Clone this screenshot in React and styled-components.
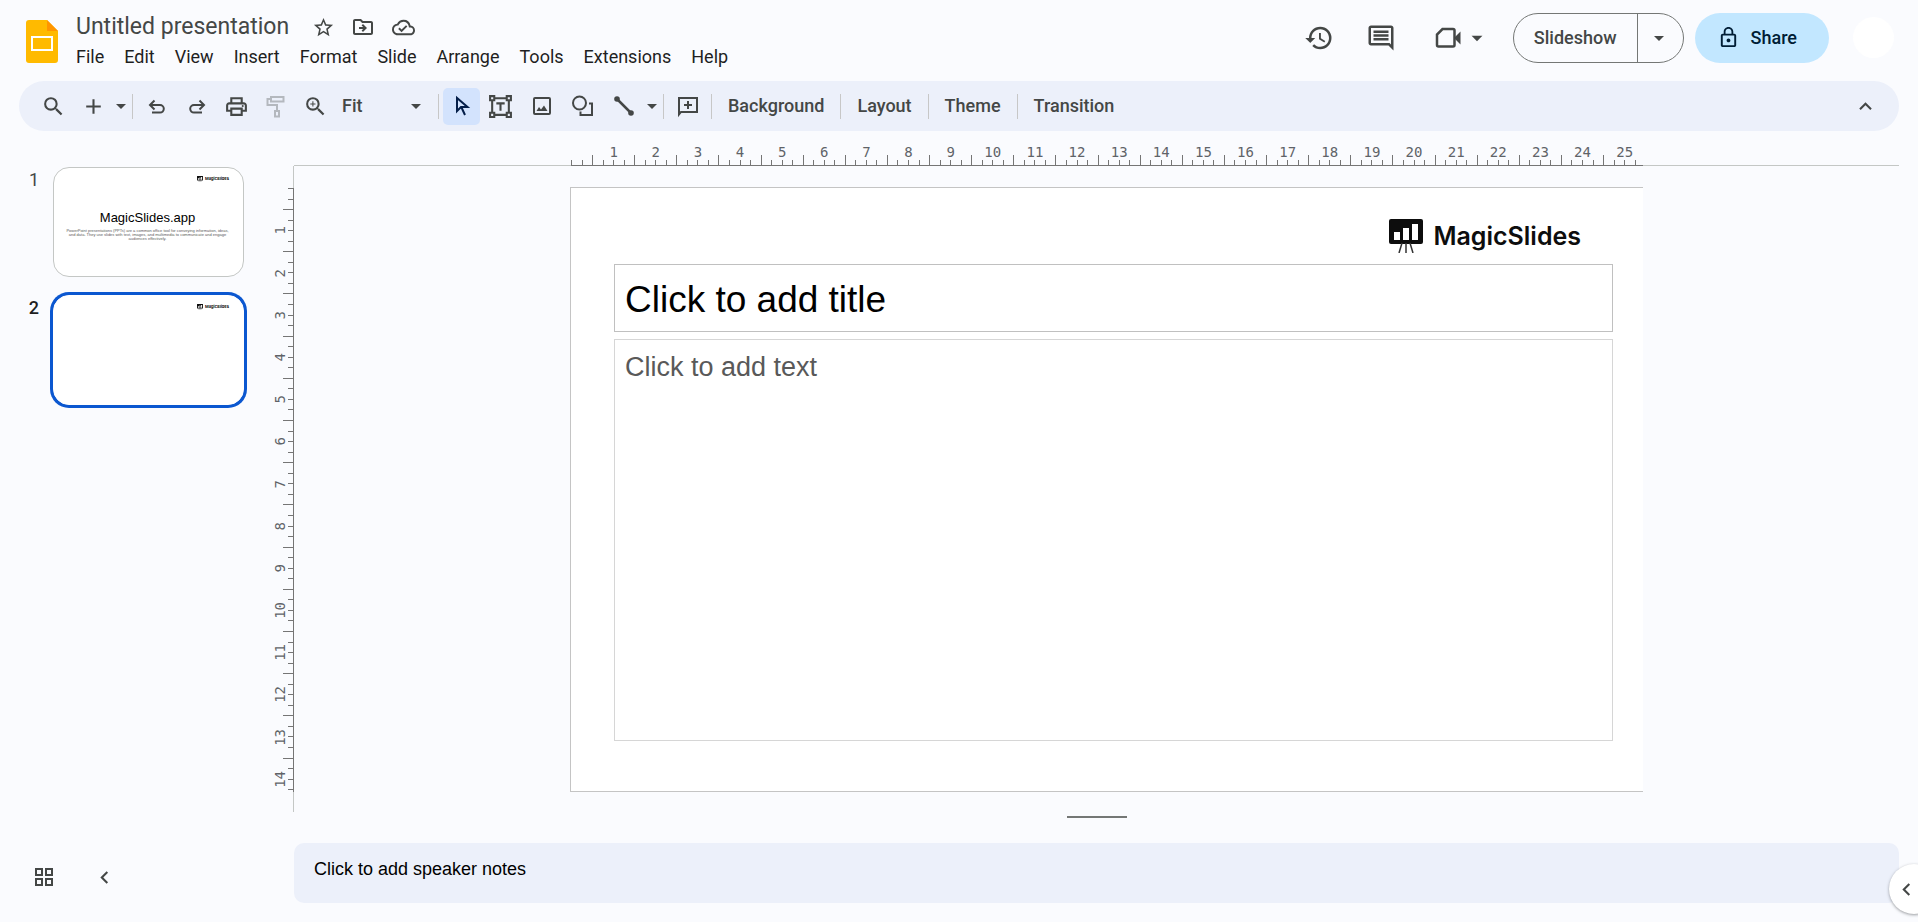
import { useState } from "react";
import styled, { createGlobalStyle } from "styled-components";
import {
  MdAdd,
  MdArrowDropDown,
  MdHistory,
  MdKeyboardArrowLeft,
  MdKeyboardArrowUp,
  MdLockOutline,
  MdOutlineCloudDone,
  MdOutlineDriveFileMove,
  MdOutlineGridView,
  MdOutlineInsertComment,
  MdOutlinePrint,
  MdSearch,
  MdStarOutline,
  MdZoomIn,
} from "react-icons/md";

//STYLES

const GlobalStyle = createGlobalStyle`
  * {
    box-sizing: border-box;
  }
  body {
    margin: 0;
    background-color: #fafbfe;
    color: #444746;
    font-family: Roboto, "Liberation Sans", sans-serif;
    overflow: hidden;
  }
  button, input, select, textarea {
    font: inherit;
    color: inherit;
    background: none;
    border: none;
    padding: 0;
    margin: 0;
    outline: none;
  }
  button {
    cursor: pointer;
  }
  svg {
    display: block;
    flex: none;
  }
`;
const Page = styled.div`
  display: flex;
  flex-direction: column;
  min-height: 100vh;
`;

//HEADER
const Header = styled.header`
  display: flex;
  height: 81px;
  padding: 12px 24px 0 26px;
`;
const LogoLink = styled.a`
  margin: 8px 8px 0 0;
`;
const TitleBlock = styled.div`
  flex: 1;
`;
const TitleRow = styled.div`
  display: flex;
  align-items: center;
  height: 30px;
  padding-left: 10px;
`;
const DocTitle = styled.input`
  width: 227px;
  font-family: Roboto, sans-serif;
  font-size: 23px;
  line-height: 30px;
`;
const TitleIcon = styled.button`
  display: flex;
  justify-content: center;
  width: 40px;
`;
const MenuBar = styled.nav`
  display: flex;
`;
const MenuItem = styled.button`
  padding: 0 10px;
  font-size: 18px;
  line-height: 30px;
  color: #1f1f1f;
`;
const Actions = styled.div`
  display: flex;
  align-items: center;
  height: 51px;
`;
const ActionButton = styled.button`
  display: flex;
  align-items: center;
  justify-content: center;
  gap: 2px;
  width: ${(props) => props.$width || 62}px;
  height: 50px;
`;
const SplitButton = styled.div`
  display: flex;
  height: 50px;
  border: 1px solid #747775;
  border-radius: 25px;
  font-size: 18px;
  font-weight: 500;
`;
const SplitMain = styled.button`
  padding: 0 20px;
`;
const SplitArrow = styled.button`
  display: flex;
  align-items: center;
  padding: 0 12px 0 9px;
  border-left: 1px solid #747775;
`;
const ShareButton = styled.button`
  display: flex;
  align-items: center;
  gap: 11px;
  height: 50px;
  margin: 0 24px 0 11px;
  padding: 0 32px 0 22px;
  border-radius: 25px;
  background-color: #c2e7ff;
  color: #001d35;
  font-size: 18px;
  font-weight: 500;
`;
const Avatar = styled.div`
  width: 41px;
  height: 41px;
  border-radius: 50%;
  background-color: #ffffff;
`;

//TOOLBAR
const Toolbar = styled.div`
  display: flex;
  align-items: center;
  height: 50px;
  margin: 0 19px;
  padding: 0 14px;
  border-radius: 25px;
  background-color: #ecf0fa;
`;
const Tool = styled.button`
  display: flex;
  align-items: center;
  justify-content: center;
  width: ${(props) => props.$width || 40}px;
  height: 37px;
  border-radius: 5px;
  background-color: ${(props) => (props.$active ? "#d3e3fd" : "transparent")};
  color: ${(props) => (props.$active ? "#041e49" : "#444746")};
  &:disabled {
    color: #b4b8be;
  }
`;
const TextTool = styled.button`
  padding: 0 12px;
  font-size: 18px;
  font-weight: 500;
  line-height: 36px;
`;
const Separator = styled.span`
  width: 1px;
  height: 25px;
  margin: 0 4px;
  background-color: #c7c7c7;
`;
const ZoomField = styled.label`
  display: flex;
  align-items: center;
  width: 99px;
  padding: 0 6px 0 7px;
`;
const ZoomSelect = styled.select`
  flex: 1;
  appearance: none;
  font-size: 18px;
  font-weight: 500;
  line-height: 36px;
`;
const Spacer = styled.span`
  flex: 1;
`;

//WORKSPACE
const Workspace = styled.div`
  display: flex;
  flex: 1;
`;
const Sidebar = styled.aside`
  display: flex;
  flex-direction: column;
  justify-content: space-between;
  width: 270px;
  padding-top: 36px;
`;
const Filmstrip = styled.ol`
  display: flex;
  flex-direction: column;
  gap: 18px;
  margin: 0;
  padding: 0;
  list-style: none;
`;
const FilmItem = styled.li`
  display: flex;
  gap: 14px;
`;
const FilmNumber = styled.span`
  width: 39px;
  padding-top: 3px;
  text-align: right;
  font-size: 18px;
  line-height: 20px;
  font-weight: ${(props) => (props.$active ? 500 : 400)};
  color: ${(props) => (props.$active ? "#1f1f1f" : "#444746")};
`;
const Thumb = styled.button`
  display: flex;
  flex-direction: column;
  align-items: center;
  width: 191px;
  height: 110px;
  padding: 8px 14px 0 12px;
  border: 1px solid ${(props) => (props.$active ? "#ffffff" : "#c4c7c5")};
  border-radius: 16px;
  background-color: #ffffff;
  box-shadow: ${(props) => (props.$active ? "0 0 0 3px #0b57d0" : "none")};
`;
const ThumbTitle = styled.span`
  margin-top: 28px;
  font-family: "Liberation Sans", Arial, sans-serif;
  font-size: 13px;
  line-height: 16px;
  color: #000000;
`;
const ThumbText = styled.span`
  margin-top: 3px;
  font-family: "Liberation Sans", Arial, sans-serif;
  font-size: 4px;
  line-height: 4px;
  color: #595959;
`;
const ViewControls = styled.div`
  display: flex;
  align-items: center;
  height: 50px;
  margin-bottom: 20px;
  padding-left: 24px;
`;
const ViewButton = styled.button`
  display: flex;
  justify-content: center;
  width: 40px;
  & + & {
    margin-left: 20px;
  }
`;

//EDITOR
const Editor = styled.main`
  flex: 1;
  display: flex;
  flex-direction: column;
  margin: 0 19px 19px 0;
`;
const Stage = styled.div`
  flex: 1;
  display: grid;
  grid-template-columns: 24px 1fr;
  grid-template-rows: 35px 1fr;
`;
const TopRuler = styled.div`
  grid-column: 2;
  display: flex;
  padding: 0 256px 0 277px;
  border-bottom: 1px solid #c4c7c5;
`;
const SideRuler = styled.div`
  display: flex;
  flex-direction: column;
  padding: 22px 0 20px;
  border-right: 1px solid #c4c7c5;
`;
const Track = styled.div`
  flex: 1;
  display: flex;
  justify-content: space-between;
  flex-direction: ${(props) => (props.$vertical ? "column" : "row")};
  margin: ${(props) => (props.$vertical ? "0 -1px 0 0" : "0 0 -1px")};
  padding: ${(props) => (props.$vertical ? "0 0 1px" : "0 7px 0 0")};
  border: 0 solid #757575;
  border-width: ${(props) => (props.$vertical ? "0 1px 0 0" : "0 0 1px")};
  font-family: "DejaVu Sans Mono", monospace;
  font-size: 14px;
  line-height: 15px;
  color: #5f6368;
`;
const TopTick = styled.span`
  display: flex;
  flex-direction: column;
  align-items: center;
  justify-content: flex-end;
  width: 1px;
  &::after {
    content: "";
    flex: none;
    width: 1px;
    height: ${(props) => (props.$half ? 10 : 5)}px;
    background-color: #757575;
  }
`;
const SideTick = styled.span`
  display: flex;
  align-items: center;
  justify-content: flex-end;
  height: 1px;
  &::after {
    content: "";
    flex: none;
    width: ${(props) => (props.$half ? 10 : 5)}px;
    height: 1px;
    background-color: #757575;
  }
`;
const SideLabel = styled.span`
  writing-mode: vertical-rl;
  transform: rotate(180deg);
`;
const Canvas = styled.div`
  padding: 21px 256px 20px 276px;
`;
const Slide = styled.section`
  box-sizing: content-box;
  aspect-ratio: 16 / 9;
  border: 1px solid #c4c4c4;
  border-right: none;
  background-color: #ffffff;
`;
const SlideBody = styled.div`
  display: flex;
  flex-direction: column;
  height: 100%;
  padding: 0 30px 50px 43px;
`;
const SlideLogo = styled.div`
  display: flex;
  justify-content: flex-end;
  height: 76px;
  padding: 30px 32px 0 0;
`;
const Brand = styled.span`
  display: flex;
  align-items: center;
  gap: ${(props) => (props.$small ? 2 : 10)}px;
  height: ${(props) => (props.$small ? 6 : 36)}px;
  align-self: ${(props) => (props.$small ? "flex-end" : "auto")};
  font-family: Inter, sans-serif;
  font-size: ${(props) => (props.$small ? 4 : 25)}px;
  line-height: 1;
  font-weight: ${(props) => (props.$small ? 700 : 600)};
  color: #0d0d0d;
`;
const TitleField = styled.input`
  height: 68px;
  padding: 3px 10px 0;
  border: 1px solid #c0c0c0;
  font-family: "Liberation Sans", Arial, sans-serif;
  font-size: 37px;
  &::placeholder {
    color: #000000;
  }
`;
const TextField = styled.textarea`
  flex: 1;
  margin-top: 7px;
  padding: 11px 10px;
  border: 1px solid #d6d6d6;
  resize: none;
  font-family: "Liberation Sans", Arial, sans-serif;
  font-size: 27px;
  line-height: 32px;
  &::placeholder {
    color: #595959;
  }
`;
const Resizer = styled.div`
  height: 31px;
  margin-left: 24px;
  padding-top: 4px;
`;
const Handle = styled.div`
  width: 60px;
  height: 2px;
  margin: 0 auto;
  background-color: #747775;
`;
const Notes = styled.textarea`
  height: 60px;
  margin-left: 24px;
  padding: 15px 20px;
  border-radius: 10px;
  background-color: #ecf0fa;
  resize: none;
  font-family: "Liberation Sans", Arial, sans-serif;
  font-size: 18px;
  line-height: 22px;
  &::placeholder {
    color: #000000;
  }
`;
const SidePanelToggle = styled.button`
  position: fixed;
  right: -21px;
  bottom: 8px;
  display: flex;
  align-items: center;
  width: 50px;
  height: 50px;
  padding-left: 5px;
  border-radius: 50%;
  background-color: #ffffff;
  box-shadow: 0 1px 3px rgba(60, 64, 67, 0.5);
`;

//ICONS

const SlidesLogo = () => (
  <svg width="32" height="43" viewBox="0 0 32 43">
    <path d="M3 0h18l11 11v29a3 3 0 0 1-3 3H3a3 3 0 0 1-3-3V3a3 3 0 0 1 3-3z" fill="#ffba00" />
    <path d="M21 0l11 11H21z" fill="#ff9500" />
    <path d="M5 16h22v15H5zM7 18v11h18v-11z" fill="#fff" fillRule="evenodd" />
  </svg>
);

const Line = ({ size = 24, children }) => (
  <svg width={size} height={size} viewBox="0 0 24 24" fill="none" stroke="currentColor" strokeWidth="2">
    {children}
  </svg>
);

const UndoIcon = () => (
  <Line>
    <path d="M5.500 11H15a3.800 3.800 0 0 1 0 7.600H7M9.500 6.500L5 11l4.500 4.500" />
  </Line>
);
const RedoIcon = () => (
  <Line>
    <path d="M18.500 11H9a3.800 3.800 0 0 0 0 7.600h8M14.500 6.500L19 11l-4.500 4.500" />
  </Line>
);
const PaintIcon = () => (
  <Line>
    <path d="M7 3h12.500v4.500H7zM7 5H3.500v6H13v6M11 17h4v5.500h-4z" />
  </Line>
);
const CursorIcon = () => (
  <Line>
    <path d="M7 4v13l4-4h6.500zM11.500 13.500l3.500 7.500" />
  </Line>
);
const TextBoxIcon = () => (
  <Line size={25}>
    <path d="M6 4h12M6 20h12M4 6v12M20 6v12" />
    <path d="M2 2h4v4H2zM18 2h4v4h-4zM2 18h4v4H2zM18 18h4v4h-4z" />
    <path d="M8 9h8M12 9v7" />
  </Line>
);
const ImageIcon = () => (
  <Line>
    <rect x="4" y="4" width="16" height="16" rx="1" />
    <path d="M6.500 17l2.500-4 2 2.500 3-4 3.500 5.500z" fill="currentColor" stroke="none" />
  </Line>
);
const ShapeIcon = () => (
  <Line>
    <circle cx="8.500" cy="9" r="6.500" />
    <path d="M18 9.500h3V21H9.500v-3.500" />
  </Line>
);
const LineIcon = () => (
  <Line>
    <path d="M5 5l14 14" strokeWidth="2.500" />
    <circle cx="5" cy="5" r="2.800" fill="currentColor" stroke="none" />
    <circle cx="19" cy="19" r="2.800" fill="currentColor" stroke="none" />
  </Line>
);
const AddCommentIcon = () => (
  <Line>
    <path d="M3 20.500V4h18v14H5z" />
    <path d="M12 7v8M8 11h8" />
  </Line>
);
const VideoIcon = () => (
  <svg width="28" height="24" viewBox="0 0 28 24" fill="none" stroke="currentColor" strokeWidth="2.500">
    <path d="M8.500 3H19a1.500 1.500 0 0 1 1.500 1.500v14.500a1.500 1.500 0 0 1-1.500 1.500H4.500A1.500 1.500 0 0 1 3 19V8.500z" />
    <path d="M20 12l6.500-6.500v13z" fill="currentColor" stroke="none" />
  </svg>
);
const EaselIcon = ({ size }) => (
  <svg width={size} height={size} viewBox="0 0 34 34">
    <path d="M2 0h30a2 2 0 0 1 2 2v21a2 2 0 0 1-2 2H2a2 2 0 0 1-2-2V2a2 2 0 0 1 2-2z" fill="#0d0d0d" />
    <path d="M5 13h6v8H5zM14 9h6v12h-6zM23 5h6v16h-6z" fill="#fff" />
    <path d="M13 24l-3 10M17 24v10M21 24l3 10" stroke="#333" strokeWidth="1.500" />
  </svg>
);

//DATA

const menus = ["File", "Edit", "View", "Insert", "Format", "Slide", "Arrange", "Tools", "Extensions", "Help"];

const slides = [
  {
    id: 1,
    title: "MagicSlides.app",
    text: "PowerPoint presentations (PPTs) are a common office tool for conveying information, ideas, and data. They use slides with text, images, and multimedia to communicate and engage audiences effectively.",
  },
  { id: 2 },
];

//four ticks per centimetre
const ticks = (count) => Array.from({ length: count }, (_, i) => i);
const tickLabel = (i) => (i > 0 && i % 4 === 0 ? i / 4 : null);

//COMPONENT
function App() {
  const [current, setCurrent] = useState(2);

  return (
    <Page>
      <GlobalStyle />
      <Header>
        <LogoLink href="#" aria-label="Slides home">
          <SlidesLogo />
        </LogoLink>
        <TitleBlock>
          <TitleRow>
            <DocTitle aria-label="Rename" defaultValue="Untitled presentation" />
            <TitleIcon aria-label="Star"><MdStarOutline size={23} /></TitleIcon>
            <TitleIcon aria-label="Move"><MdOutlineDriveFileMove size={24} /></TitleIcon>
            <TitleIcon aria-label="Document status"><MdOutlineCloudDone size={23} /></TitleIcon>
          </TitleRow>
          <MenuBar>
            {menus.map((menu) => (
              <MenuItem key={menu}>{menu}</MenuItem>
            ))}
          </MenuBar>
        </TitleBlock>
        <Actions>
          <ActionButton aria-label="Version history"><MdHistory size={30} /></ActionButton>
          <ActionButton aria-label="Comments"><MdOutlineInsertComment size={30} /></ActionButton>
          <ActionButton aria-label="Join a call" $width={101}>
            <VideoIcon />
            <MdArrowDropDown size={26} />
          </ActionButton>
          <SplitButton>
            <SplitMain>Slideshow</SplitMain>
            <SplitArrow aria-label="Slideshow options"><MdArrowDropDown size={24} /></SplitArrow>
          </SplitButton>
          <ShareButton>
            <MdLockOutline size={23} />
            Share
          </ShareButton>
          <Avatar />
        </Actions>
      </Header>

      <Toolbar role="toolbar">
        <Tool aria-label="Search the menus"><MdSearch size={25} /></Tool>
        <Tool aria-label="New slide"><MdAdd size={25} /></Tool>
        <Tool aria-label="New slide with layout" $width={15}><MdArrowDropDown size={24} /></Tool>
        <Separator />
        <Tool aria-label="Undo"><UndoIcon /></Tool>
        <Tool aria-label="Redo" $width={39}><RedoIcon /></Tool>
        <Tool aria-label="Print"><MdOutlinePrint size={25} /></Tool>
        <Tool aria-label="Paint format" $width={39} disabled><PaintIcon /></Tool>
        <Tool aria-label="Zoom"><MdZoomIn size={25} /></Tool>
        <ZoomField>
          <ZoomSelect aria-label="Zoom level">
            <option>Fit</option>
          </ZoomSelect>
          <MdArrowDropDown size={24} />
        </ZoomField>
        <Separator />
        <Tool aria-label="Select" $width={37} $active><CursorIcon /></Tool>
        <Tool aria-label="Text box" $width={41}><TextBoxIcon /></Tool>
        <Tool aria-label="Insert image" $width={41}><ImageIcon /></Tool>
        <Tool aria-label="Shape" $width={41}><ShapeIcon /></Tool>
        <Tool aria-label="Line" $width={41}><LineIcon /></Tool>
        <Tool aria-label="Select line" $width={15}><MdArrowDropDown size={24} /></Tool>
        <Separator />
        <Tool aria-label="Add comment" $width={39}><AddCommentIcon /></Tool>
        <Separator />
        <TextTool>Background</TextTool>
        <Separator />
        <TextTool>Layout</TextTool>
        <Separator />
        <TextTool>Theme</TextTool>
        <Separator />
        <TextTool>Transition</TextTool>
        <Spacer />
        <Tool aria-label="Hide the menus"><MdKeyboardArrowUp size={25} /></Tool>
      </Toolbar>

      <Workspace>
        <Sidebar>
          <Filmstrip>
            {slides.map((slide) => (
              <FilmItem key={slide.id}>
                <FilmNumber $active={slide.id === current}>{slide.id}</FilmNumber>
                <Thumb
                  aria-label={`Slide ${slide.id}`}
                  $active={slide.id === current}
                  onClick={() => setCurrent(slide.id)}
                >
                  <Brand $small>
                    <EaselIcon size={6} />
                    MagicSlides
                  </Brand>
                  {slide.title ? <ThumbTitle>{slide.title}</ThumbTitle> : null}
                  {slide.text ? <ThumbText>{slide.text}</ThumbText> : null}
                </Thumb>
              </FilmItem>
            ))}
          </Filmstrip>
          <ViewControls>
            <ViewButton aria-label="Grid view"><MdOutlineGridView size={24} /></ViewButton>
            <ViewButton aria-label="Hide filmstrip"><MdKeyboardArrowLeft size={25} /></ViewButton>
          </ViewControls>
        </Sidebar>

        <Editor>
          <Stage>
            <TopRuler>
              <Track>
                {ticks(102).map((i) => (
                  <TopTick key={i} $half={i % 4 === 2}>{tickLabel(i)}</TopTick>
                ))}
              </Track>
            </TopRuler>
            <SideRuler>
              <Track $vertical>
                {ticks(58).map((i) => (
                  <SideTick key={i} $half={i % 4 === 2}>
                    <SideLabel>{tickLabel(i)}</SideLabel>
                  </SideTick>
                ))}
              </Track>
            </SideRuler>
            <Canvas>
              <Slide>
                <SlideBody>
                  <SlideLogo>
                    <Brand>
                      <EaselIcon size={34} />
                      MagicSlides
                    </Brand>
                  </SlideLogo>
                  <TitleField aria-label="Title" placeholder="Click to add title" />
                  <TextField aria-label="Text" placeholder="Click to add text" />
                </SlideBody>
              </Slide>
            </Canvas>
          </Stage>
          <Resizer>
            <Handle />
          </Resizer>
          <Notes aria-label="Speaker notes" placeholder="Click to add speaker notes" />
        </Editor>
      </Workspace>

      <SidePanelToggle aria-label="Show side panel">
        <MdKeyboardArrowLeft size={25} />
      </SidePanelToggle>
    </Page>
  );
}

export default App;
